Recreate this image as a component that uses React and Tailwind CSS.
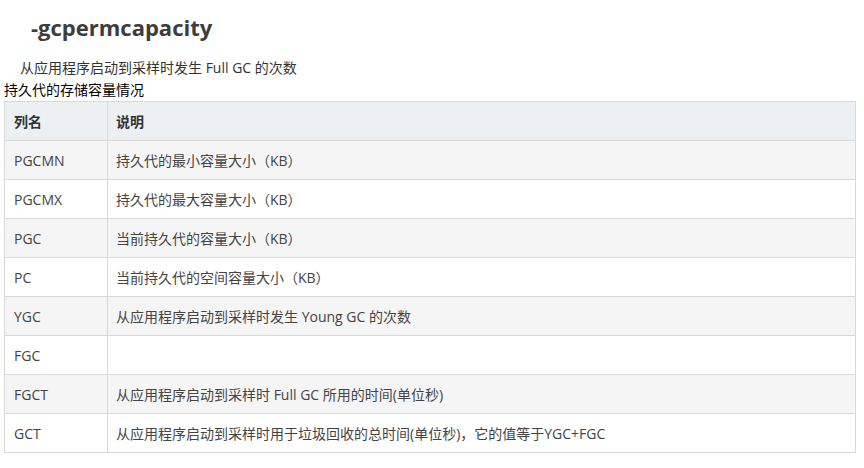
import React from "react";

const rows = [
  ["PGCMN", "持久代的最小容量大小（KB）"],
  ["PGCMX", "持久代的最大容量大小（KB）"],
  ["PGC", "当前持久代的容量大小（KB）"],
  ["PC", "当前持久代的空间容量大小（KB）"],
  ["YGC", "从应用程序启动到采样时发生 Young GC 的次数"],
  ["FGC", ""],
  ["FGCT", "从应用程序启动到采样时 Full GC 所用的时间(单位秒)"],
  ["GCT", "从应用程序启动到采样时用于垃圾回收的总时间(单位秒)，它的值等于YGC+FGC"],
];

export default function App() {
  return (
    <div
      className="w-[864px] h-[468px] bg-white overflow-hidden"
      style={{ fontFamily: '"Open Sans", "Noto Sans CJK SC", sans-serif' }}
    >
      <h1 className="pl-[31px] pt-[12px] text-[22px] leading-[30px] font-bold text-[#3d3d3d]">
        -gcpermcapacity
      </h1>
      <p className="pl-[20px] mt-[16px] text-[14px] leading-[20px] text-[#333]">
        从应用程序启动到采样时发生 Full GC 的次数
      </p>
      <p className="pl-[4px] mt-[2px] text-[14px] leading-[20px] text-black font-normal">持久代的存储容量情况</p>
      <table className="ml-[4px] mt-[1px] w-[852px] border-collapse text-[14px] text-[#444]">
        <thead>
          <tr className="bg-[#edf0f3] h-[39px]">
            <th className="w-[103px] border border-[#d9d9d9] px-[9px] text-left font-bold text-[#333]">列名</th>
            <th className="border border-[#d9d9d9] px-[8px] text-left font-bold text-[#333]">说明</th>
          </tr>
        </thead>
        <tbody>
          {rows.map(([a, b], i) => (
            <tr key={a} className={`h-[39px] ${i % 2 === 0 ? "bg-[#f5f5f5]" : "bg-white"}`}>
              <td className="border border-[#d9d9d9] px-[9px]">{a}</td>
              <td className="border border-[#d9d9d9] px-[8px]">{b}</td>
            </tr>
          ))}
        </tbody>
      </table>
    </div>
  );
}
